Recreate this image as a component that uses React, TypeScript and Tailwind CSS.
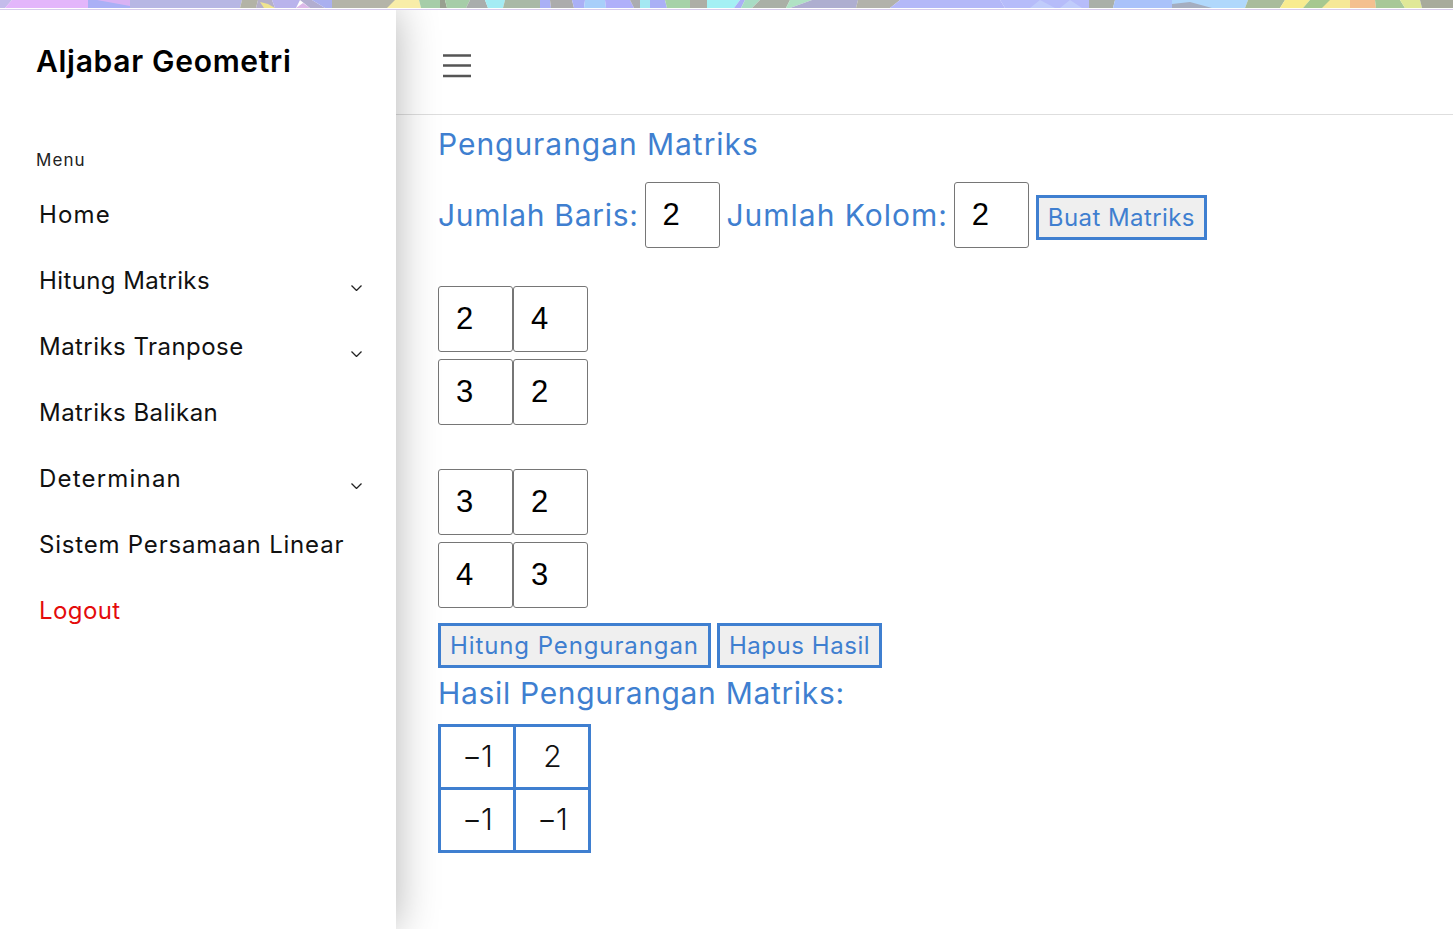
const BLUE = "text-[#3f7fd0]";

// colour pieces of the page's background picture, showing as a thin strip on top
const stripPieces: [string, string][] = [
  ["0,0 12,0 5,8 0,8", "#c4bceb"],
  ["12,0 88,0 88,8 5,8", "#e3b6fb"],
  ["88,0 130,0 130,8 88,8", "#aab0f6"],
  ["97,0 130,0 130,6", "#d9b2f4"],
  ["130,0 242,0 240,8 130,8", "#b7b7e4"],
  ["242,0 258,0 256,8 240,8", "#b3b3a6"],
  ["258,0 272,0 275,8 256,8", "#b5b0c8"],
  ["260,2 268,4 275,8 264,8", "#efe48e"],
  ["272,0 300,0 296,8 275,8", "#b9b3ec"],
  ["296,8 303,3 310,8", "#dcb8e8"],
  ["300,0 312,0 325,8 310,8", "#b2aed0"],
  ["312,0 332,0 332,8 325,8", "#aab0f0"],
  ["332,0 387,0 387,8 332,8", "#b4b4a8"],
  ["387,0 419,0 421,8 387,8", "#f8eda8"],
  ["387,0 395,0 387,8", "#b4b4a8"],
  ["419,0 440,0 440,8 421,8", "#a6cda8"],
  ["440,0 445,0 447,8 440,8", "#98a090"],
  ["445,0 470,0 466,8 447,8", "#a6cda8"],
  ["470,0 485,0 488,8 466,8", "#a9adac"],
  ["485,0 505,0 503,8 488,8", "#a4ecf4"],
  ["505,0 540,0 540,8 503,8", "#a9b9a6"],
  ["540,0 550,0 551,8 540,8", "#aab0f6"],
  ["550,0 572,0 574,8 551,8", "#acacac"],
  ["572,0 585,0 584,8 574,8", "#aab0f6"],
  ["585,0 605,0 606,8 584,8", "#a8cffa"],
  ["605,0 630,0 634,8 606,8", "#b0b0fa"],
  ["630,0 640,0 640,8 634,8", "#abacb0"],
  ["640,0 650,0 650,8 640,8", "#a4e8f2"],
  ["650,0 665,0 667,8 650,8", "#aab0f6"],
  ["665,0 690,0 690,8 667,8", "#a6d2a8"],
  ["690,0 707,0 707,8 690,8", "#adaea6"],
  ["707,0 740,0 734,8 707,8", "#a4f0f4"],
  ["740,0 745,0 741,8 734,8", "#aab0f6"],
  ["745,0 760,0 752,8 741,8", "#a8dcc4"],
  ["760,0 790,0 786,8 752,8", "#aab0a6"],
  ["790,0 812,0 790,8 786,8", "#b0e2c4"],
  ["812,0 858,0 856,8 790,8", "#aeaed0"],
  ["858,0 900,0 890,8 856,8", "#b2b2aa"],
  ["900,0 1000,0 1005,8 890,8", "#b4b8f8"],
  ["1000,0 1089,0 1089,8 1005,8", "#b6bcfa"],
  ["1040,0 1055,8 1030,8", "#c0ccfb"],
  ["1070,0 1082,8 1060,8", "#c0ccfb"],
  ["1089,0 1115,0 1113,8 1089,8", "#aab0a8"],
  ["1115,0 1172,0 1172,8 1113,8", "#aac2fa"],
  ["1172,0 1248,0 1245,8 1172,8", "#b0d8fc"],
  ["1172,4 1190,2 1212,8 1172,8", "#a4aec0"],
  ["1248,0 1262,0 1285,0 1280,8 1245,8", "#a9bc9c"],
  ["1285,0 1310,0 1303,8 1280,8", "#f8ec90"],
  ["1310,0 1332,0 1328,8 1303,8", "#a6c890"],
  ["1332,0 1345,0 1335,8 1328,8", "#f8ec90"],
  ["1330,0 1350,0 1350,8 1322,8", "#f6e898"],
  ["1350,0 1375,0 1376,8 1350,8", "#f4c090"],
  ["1375,0 1400,0 1405,8 1376,8", "#a8c898"],
  ["1400,0 1420,0 1422,8 1405,8", "#e0e898"],
  ["1420,0 1453,0 1453,8 1422,8", "#a8ab9c"],
];

const TopStrip = () => (
  <div className="h-[10px] border-b border-[#d8cdec] bg-white pb-px">
    <svg width="1453" height="8" viewBox="0 0 1453 8" className="block">
      {stripPieces.map(([points, fill]) => (
        <polygon key={points} points={points} fill={fill} />
      ))}
    </svg>
  </div>
);

const menuItems = [
  { label: "Home", tracking: "tracking-[1.15px]" },
  { label: "Hitung Matriks", tracking: "tracking-[0.4px]", hasChild: true },
  { label: "Matriks Tranpose", tracking: "tracking-[0.45px]", hasChild: true },
  { label: "Matriks Balikan", tracking: "tracking-[0.45px]" },
  { label: "Determinan", tracking: "tracking-[1.2px]", hasChild: true },
  { label: "Sistem Persamaan Linear", tracking: "tracking-[0.8px]" },
  { label: "Logout", tracking: "tracking-[0.4px]", danger: true },
];

const Sidebar = () => (
  <aside className="relative z-10 w-[396px] shrink-0 bg-white pl-[36px] shadow-[0_0_40px_rgba(0,0,0,0.3)]">
    <div className="pt-[31px] text-[30px] leading-[40px] font-semibold tracking-[0.7px] text-black">
      Aljabar Geometri
    </div>
    <div className="mt-[67px] text-[17px] leading-[24px] tracking-[1.1px] text-[#222]">
      Menu
    </div>
    <ul className="mt-[20px] pl-[3px]">
      {menuItems.map((item) => (
        <li
          key={item.label}
          className={`flex h-[66px] items-start pt-[7px] pr-[34px] text-[24px] leading-[32px] ${item.tracking} ${
            item.danger ? "text-[#e40b0b]" : "text-[#111]"
          }`}
        >
          <span className="flex-1">{item.label}</span>
          {item.hasChild && (
            <svg width="11" height="6" viewBox="0 0 11 6" className="mt-[20px]">
              <path d="M0.5 0.5L5.5 5.5L10.5 0.5" fill="none" stroke="#222" strokeWidth="1.3" />
            </svg>
          )}
        </li>
      ))}
    </ul>
  </aside>
);

const NumberBox = ({ value }: { value: number }) => (
  <input
    type="text"
    readOnly
    value={value}
    className="h-[66px] w-[75px] rounded-[3px] border border-[#767676] bg-white pl-[17px] font-['Liberation_Sans',sans-serif] text-[31px] text-black outline-none"
  />
);

const MatrixInput = ({ rows }: { rows: number[][] }) => (
  <div className="flex flex-col gap-[7px]">
    {rows.map((row, i) => (
      <div key={i} className="flex">
        {row.map((value, j) => (
          <NumberBox key={j} value={value} />
        ))}
      </div>
    ))}
  </div>
);

const ActionButton = ({ label, className }: { label: string; className: string }) => (
  <button
    className={`h-[45px] border-[3px] border-[#3f7fd0] bg-[#efefef] px-[9px] text-[24px] leading-[30px] ${BLUE} ${className}`}
  >
    {label}
  </button>
);

const result = [
  ["−1", "2"],
  ["−1", "−1"],
];

export default function App() {
  return (
    <div className="min-h-[929px] overflow-hidden bg-white font-['Inter',sans-serif]">
      <div className="relative z-20">
        <TopStrip />
      </div>
      <div className="flex h-[919px]">
        <Sidebar />
        <main className="flex-1">
          <header className="flex h-[105px] items-start border-b border-[#dedede] pt-[44px] pl-[47px]">
            <svg width="28" height="24" viewBox="0 0 28 24" className="block">
              <path d="M0 1.5h28M0 11.5h28M0 22h28" stroke="#555" strokeWidth="2.4" />
            </svg>
          </header>
          <div className="pl-[42px]">
            <h1
              className={`mt-[9px] text-[30px] leading-[40px] font-normal tracking-[0.95px] ${BLUE}`}
            >
              Pengurangan Matriks
            </h1>
            <div className="mt-[18px] flex items-center">
              <span
                className={`mr-[6px] text-[30px] leading-[40px] tracking-[0.7px] ${BLUE}`}
              >
                Jumlah Baris:
              </span>
              <NumberBox value={2} />
              <span
                className={`mr-[6px] ml-[7px] text-[30px] leading-[40px] tracking-[0.98px] ${BLUE}`}
              >
                Jumlah Kolom:
              </span>
              <NumberBox value={2} />
              <div className="mt-[5px] ml-[7px]">
                <ActionButton label="Buat Matriks" className="tracking-[0.42px]" />
              </div>
            </div>
            <div className="mt-[38px]">
              <MatrixInput
                rows={[
                  [2, 4],
                  [3, 2],
                ]}
              />
            </div>
            <div className="mt-[44px]">
              <MatrixInput
                rows={[
                  [3, 2],
                  [4, 3],
                ]}
              />
            </div>
            <div className="mt-[15px] flex gap-[6px]">
              <ActionButton label="Hitung Pengurangan" className="tracking-[0.9px]" />
              <ActionButton label="Hapus Hasil" className="tracking-[0.55px]" />
            </div>
            <h2
              className={`mt-[5px] text-[30px] leading-[40px] font-normal tracking-[0.67px] ${BLUE}`}
            >
              Hasil Pengurangan Matriks:
            </h2>
            <table className="mt-[11px] border-collapse border-[3px] border-[#3f7fd0] text-[30px] font-light text-[#111]">
              <tbody>
                {result.map((row, i) => (
                  <tr key={i}>
                    {row.map((value, j) => (
                      <td
                        key={j}
                        className="h-[63px] w-[75px] border-[3px] border-[#3f7fd0] p-0 pb-[2px] text-center tracking-[-1px]"
                      >
                        {value}
                      </td>
                    ))}
                  </tr>
                ))}
              </tbody>
            </table>
          </div>
        </main>
      </div>
    </div>
  );
}
